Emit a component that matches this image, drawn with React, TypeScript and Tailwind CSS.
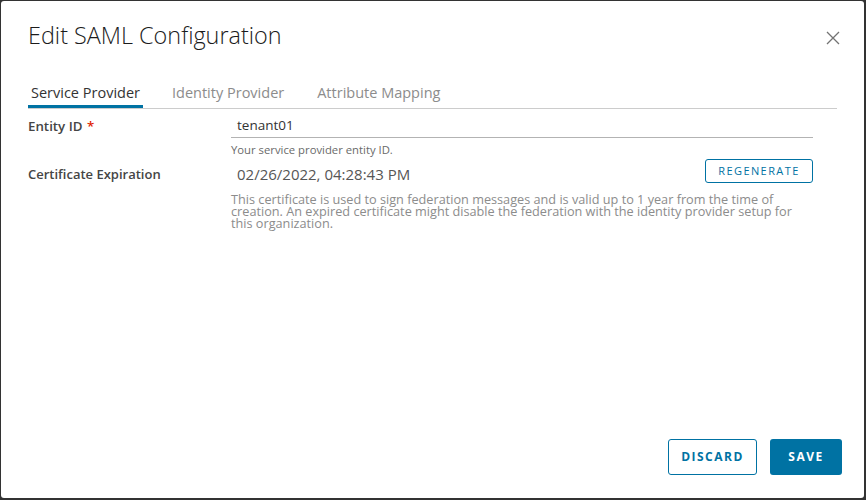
import React from "react";

export default function App() {
  return (
    <div className="w-[866px] h-[500px] bg-[#333333] pl-px pt-px pr-[2px] pb-[2px]" style={{ fontFamily: "'Open Sans', sans-serif" }}>
      <div className="relative flex h-full w-full flex-col rounded-[3px] bg-white">
        <div className="flex items-start justify-between pl-[27px] pr-[24px] pt-[19px]">
          <h1 className="text-[23.4px] font-light leading-[30px] text-[#1b1b1b]">Edit SAML Configuration</h1>
          <button className="mt-[11px] text-[#737373]" aria-label="close">
            <svg width="14" height="14" viewBox="0 0 14 14" fill="none" stroke="currentColor" strokeWidth="1.3">
              <path d="M1 1L13 13M13 1L1 13" />
            </svg>
          </button>
        </div>
        <div className="ml-[27px] mr-[27px] mt-[33px] flex border-b border-[#cccccc] text-[14.5px] leading-[20px]">
          <div className="border-b-[3px] border-[#0072a3] px-[3px] pb-[2px] text-[#333]">Service Provider</div>
          <div className="ml-[29px] pb-[5px] text-[#8c8c8c]">Identity Provider</div>
          <div className="ml-[33px] pb-[5px] text-[#8c8c8c]">Attribute Mapping</div>
        </div>
        <div className="ml-[27px] mr-[51px] mt-[6px] flex flex-col">
          <div className="flex">
            <div className="w-[203px] pt-[2px] text-[13.3px] font-semibold leading-[18px] text-[#454545]">
              Entity ID <span className="ml-[1px] text-[#e02200]">*</span>
            </div>
            <div className="flex flex-1 flex-col">
              <div className="border-b border-[#b3b3b3] pb-[3px] pl-[6px] pt-[1px] text-[13.5px] leading-[18px] text-[#333]">tenant01</div>
              <div className="mt-[5px] text-[11.3px] leading-[14px] text-[#6a6a6a]">Your service provider entity ID.</div>
            </div>
          </div>
          <div className="mt-[2px] flex">
            <div className="w-[203px] pt-[6px] text-[13px] font-semibold leading-[18px] text-[#454545]">Certificate Expiration</div>
            <div className="flex flex-1 flex-col">
              <div className="flex items-start justify-between">
                <div className="pl-[6px] pt-[5px] text-[15px] leading-[20px] text-[#565656]">02/26/2022, 04:28:43 PM</div>
                <button className="h-[24px] w-[108px] rounded-[3px] border border-[#0072a3] text-[11px] font-medium tracking-[1.4px] text-[#0072a3]">REGENERATE</button>
              </div>
              <div className="mt-[9px] text-[12.7px] leading-[12px] text-[#8c8c8c]">
                This certificate is used to sign federation messages and is valid up to 1 year from the time of creation. An expired certificate might disable the federation with the identity provider setup for this organization.
              </div>
            </div>
          </div>
        </div>
        <div className="mt-auto flex justify-end gap-[13px] pb-[23px] pr-[22px]">
          <button className="h-[36px] w-[89px] rounded-[3px] border border-[#0072a3] text-[12px] font-bold tracking-[1.5px] text-[#0072a3]">DISCARD</button>
          <button className="h-[36px] w-[72px] rounded-[3px] bg-[#0072a3] text-[12px] font-bold tracking-[1.5px] text-white">SAVE</button>
        </div>
      </div>
    </div>
  );
}
